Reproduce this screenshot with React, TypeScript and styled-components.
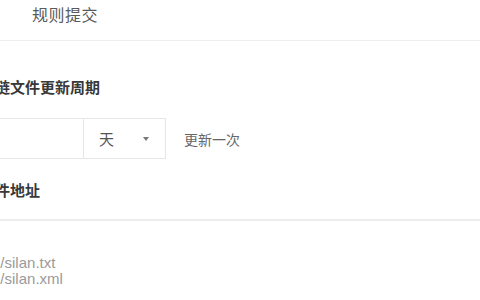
import styled, { createGlobalStyle } from "styled-components";

const GlobalStyle = createGlobalStyle`
  html, body {
    margin: 0;
    padding: 0;
    background: #fff;
  }
  body {
    font-family: "Liberation Sans", "Noto Sans CJK SC", sans-serif;
  }
`;

const Page = styled.div`
  width: 480px;
  height: 300px;
  overflow: hidden;
  background: #fff;
`;

const Header = styled.div`
  height: 41px;
  box-sizing: border-box;
  padding: 6px 0 0 32px;
  border-bottom: 1px solid #efefef;
`;

const Tab = styled.span`
  font-size: 16px;
  line-height: 20px;
  color: #5a5a5a;
  letter-spacing: 0.5px;
`;

const Form = styled.div`
  margin-left: -20px;
  padding-top: 37px;
  display: flex;
  flex-direction: column;
`;

const Label = styled.div<{ $gap: number }>`
  font-size: 15px;
  line-height: 20px;
  font-weight: bold;
  color: #383838;
  margin-bottom: ${(p) => p.$gap}px;
`;

const Row = styled.div`
  display: flex;
  align-items: center;
  height: 41px;
  margin-bottom: 22px;
`;

const Input = styled.div`
  width: 104px;
  height: 41px;
  box-sizing: border-box;
  border: 1px solid #e6e6e6;
`;

const Select = styled.div`
  width: 82px;
  height: 41px;
  box-sizing: border-box;
  border: 1px solid #e6e6e6;
  border-left: none;
  display: flex;
  align-items: center;
  justify-content: space-between;
  padding: 0 16px 0 15px;
  font-size: 15px;
  color: #555;
`;

const Caret = styled.span`
  width: 0;
  height: 0;
  border-left: 3.5px solid transparent;
  border-right: 3.5px solid transparent;
  border-top: 4px solid #777;
  margin-top: 1px;
`;

const Hint = styled.span`
  margin-left: 18px;
  font-size: 14px;
  color: #666;
`;

const Textarea = styled.div`
  margin-left: -108px;
  width: 700px;
  height: 120px;
  box-sizing: border-box;
  border-top: 2px solid #ececec;
  padding: 34px 0 0 0;
`;

const Url = styled.div`
  font-size: 15px;
  line-height: 16px;
  color: #9a9a9a;
`;

export default function App() {
  return (
    <Page>
      <GlobalStyle />
      <Header>
        <Tab>规则提交</Tab>
      </Header>
      <Form>
        <Label $gap={20}>死链文件更新周期</Label>
        <Row>
          <Input />
          <Select>
            <span>天</span>
            <Caret />
          </Select>
          <Hint>更新一次</Hint>
        </Row>
        <Label $gap={18}>文件地址</Label>
        <Textarea>
          <Url>http://www.xxx.com/silan.txt</Url>
          <Url>http://www.xxx.com/silan.xml</Url>
        </Textarea>
      </Form>
    </Page>
  );
}
